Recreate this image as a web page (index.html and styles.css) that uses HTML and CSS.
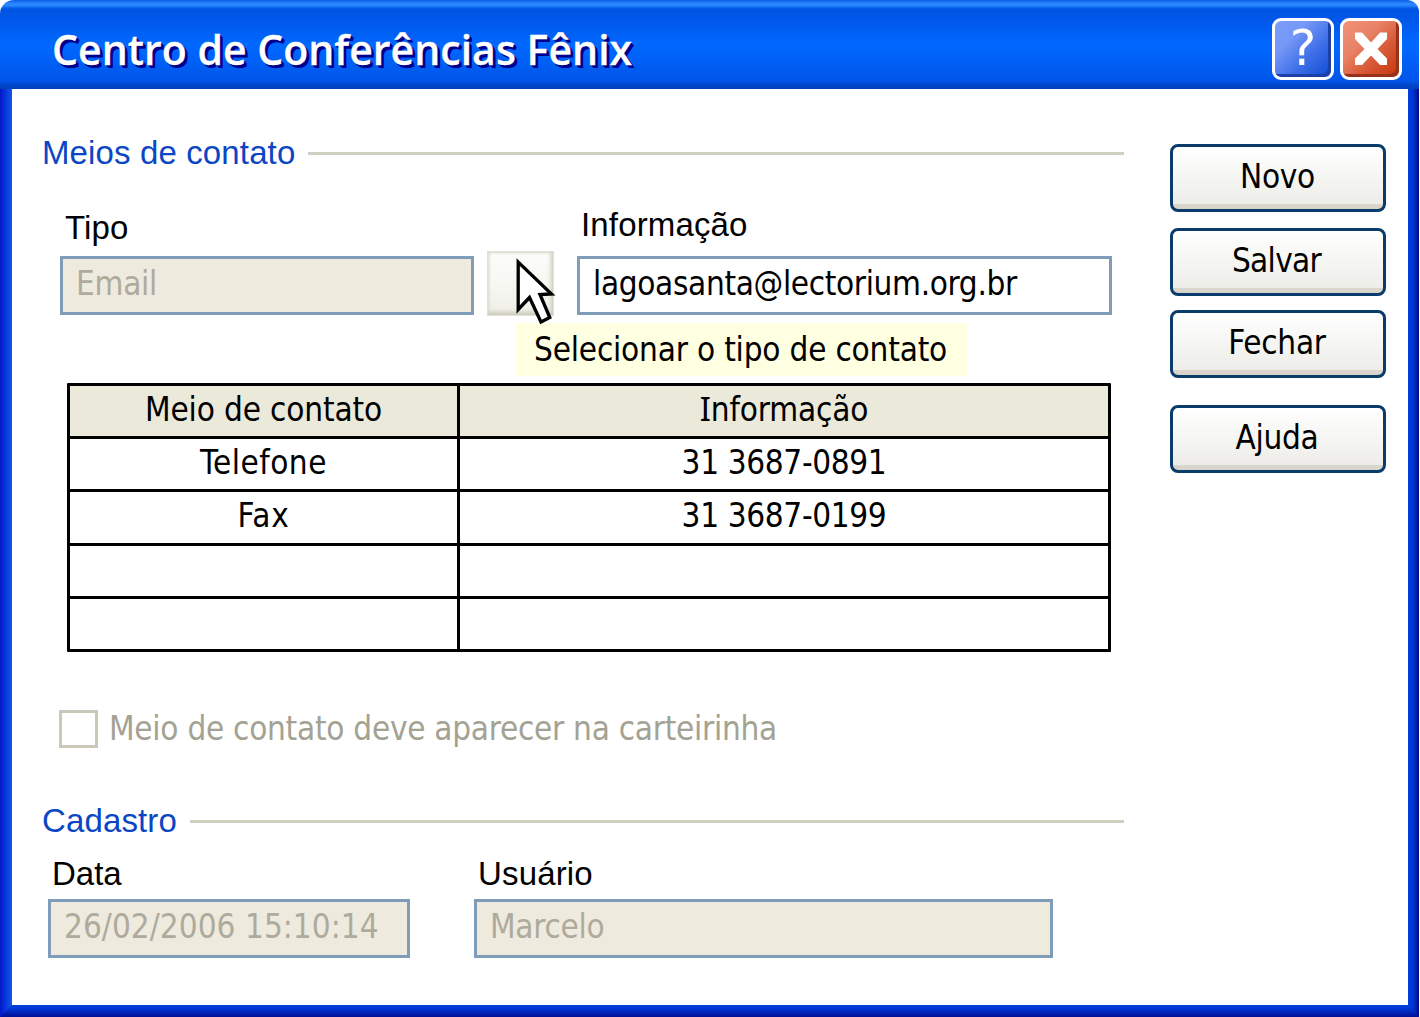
FILE: index.html
```
<!DOCTYPE html>
<html lang="pt-BR">
<head>
<meta charset="utf-8">
<title>Centro de Conferências Fênix</title>
<link rel="stylesheet" href="styles.css">
</head>
<body>
<div class="window">
  <header class="titlebar">
    <h1 class="title">Centro de Conferências Fênix</h1>
    <button class="tool tool-help" type="button" aria-label="Ajuda"><span class="mark">?</span></button>
    <button class="tool tool-close" type="button" aria-label="Fechar">
      <svg class="cross" viewBox="0 0 34 34"><path d="M1 0.500H8L17 10.500L26 0.500H33V7L23.500 17L33 26.500V33H26L17 23.500L8 33H1V26.500L10.500 17L1 7Z"/></svg>
    </button>
  </header>
  <div class="edge edge-left"></div>
  <div class="edge edge-right"></div>
  <div class="edge edge-bottom"></div>
  <div class="client">
    <main class="main">
      <div class="section section-contact"><h2>Meios de contato</h2><span class="rule"></span></div>
      <div class="fields contact-fields">
        <div class="field tipo"><span class="label">Tipo</span><div class="input disabled">Email</div></div>
        <button class="picker" type="button" aria-label="Selecionar">
          <svg class="cursor" viewBox="0 0 44 68"><path d="M4.200 5V52.500L15.500 40.500L27 65L35.800 60.500L26 37.500L37.500 37Z"/></svg>
        </button>
        <div class="field info"><span class="label">Informação</span><div class="input email">lagoasanta@lectorium.org.br</div></div>
        <div class="tooltip">Selecionar o tipo de contato</div>
      </div>
      <div class="grid">
        <div class="cell head">Meio de contato</div><div class="cell head"><span class="cap">I</span>nformação</div>
        <div class="cell tel">Telefone</div><div class="cell number">31 3687-0891</div>
        <div class="cell fax">Fax</div><div class="cell number">31 3687-0199</div>
        <div class="cell"></div><div class="cell"></div>
        <div class="cell"></div><div class="cell"></div>
      </div>
      <div class="check"><span class="box"></span><span class="check-text">Meio de contato deve aparecer na carteirinha</span></div>
      <div class="section section-record"><h2>Cadastro</h2><span class="rule"></span></div>
      <div class="fields record-fields">
        <div class="field data"><span class="label">Data</span><div class="input disabled date">26/02/2006 15:10:14</div></div>
        <div class="field user"><span class="label">Usuário</span><div class="input disabled">Marcelo</div></div>
      </div>
    </main>
    <aside class="actions">
      <button class="action" type="button">Novo</button>
      <button class="action salvar" type="button">Salvar</button>
      <button class="action fechar" type="button">Fechar</button>
      <button class="action ajuda" type="button">Ajuda</button>
    </aside>
  </div>
</div>
</body>
</html>
```
FILE: styles.css
```
* { box-sizing: border-box; }
body {
  margin: 0;
  background: #fff;
  color: #000;
  font: 33px "DejaVu Sans Condensed", "DejaVu Sans", sans-serif;
  letter-spacing: -0.27px;
  overflow: hidden;
}
button { padding: 0; margin: 0; color: inherit; font: inherit; letter-spacing: inherit; }
.window {
  display: grid;
  width: 1419px;
  height: 1017px;
  grid-template: 89px 916px 12px / 12px 1396px 11px;
}

/* Title bar */
.titlebar {
  grid-area: 1 / 1 / 2 / 4;
  display: flex;
  align-items: flex-start;
  gap: 6px;
  padding: 0 17px 0 52px;
  border-radius: 14px 12px 0 0;
  background: linear-gradient(#0a5fea 0, #1a72f2 2px, #2f8cff 4px, #2280fa 6px, #0860ea 8px, #0054e2 9px, #0056e8 18px, #0068ff 45px, #0056ea 80px, #0052e0 82px, #0048d2 84px, #003fb8 89px);
}
.title {
  flex: 1;
  margin: 0;
  color: #fff;
  font: 600 41px/98px "Open Sans", sans-serif;
  letter-spacing: 0.02px;
  height: 89px;
  text-shadow: 1px 1px 0 #00008c, 2px 2px 0 #00008c, 3px 3px 0 #00008c;
  -webkit-text-stroke: 0.3px #fff;
}
.tool {
  width: 62px;
  height: 62px;
  margin-top: 18px;
  border: 3px solid #fff;
  border-radius: 9px;
  color: #fff;
  display: flex;
  justify-content: center;
}
.tool-help {
  background: linear-gradient(135deg, #7c9df8 0, #7597f6 30%, #3f6fe8 62%, #0d4ad4 100%);
  box-shadow: inset -3px -3px 0 #1c3fa8;
}
.tool-close {
  align-items: center;
  background: linear-gradient(135deg, #f0927a 0, #e98266 35%, #d85a38 62%, #c43408 100%);
  box-shadow: inset -3px -3px 0 #98301a;
}
.mark { font: 50px/54px "DejaVu Sans", sans-serif; letter-spacing: 0; }
.cross { width: 34px; height: 34px; fill: #fff; }

/* Window frame */
.edge-left { grid-area: 2 / 1 / 4 / 2; background: linear-gradient(90deg, #0018c8, #0838dc 50%, #1258ea); }
.edge-right { grid-area: 2 / 3 / 4 / 4; background: linear-gradient(90deg, #0040e0, #0034d0 45%, #001aa8 80%, #000c80); }
.edge-bottom {
  grid-area: 3 / 1 / 4 / 4;
  background: linear-gradient(#0040e0, #0034d0 35%, #001aa8 80%, #001090);
  clip-path: polygon(12px 0, 1408px 0, 100% 100%, 0 100%);
}

.client { grid-area: 2 / 2 / 3 / 3; display: flex; padding: 43px 22px 0 30px; }
.main { width: 1082px; margin-right: 46px; }

/* Section headings */
.section { display: flex; align-items: center; height: 40px; }
.section h2 {
  margin: 0;
  padding-top: 2px;
  color: #0b46c4;
  font: 33px/40px "Liberation Sans", sans-serif;
  letter-spacing: 0.13px;
}
.section-contact h2 { width: 266px; }
.section-record h2 { width: 148px; }
.rule { flex: 1; height: 3px; margin-top: 3px; background: #d0d0c2; }

/* Fields */
.fields { display: flex; align-items: flex-end; }
.contact-fields { position: relative; margin: 33px 0 0 18px; }
.label {
  display: block;
  font: 33px/40px "Liberation Sans", sans-serif;
  letter-spacing: 0.15px;
}
.input {
  height: 59px;
  padding-left: 13px;
  border: 3px solid #7f9db9;
  background: #fff;
  line-height: 49px;
  white-space: nowrap;
}
.disabled { background: #eeeade; color: #aeab9c; }
.email { letter-spacing: -0.34px; }
.date { letter-spacing: 0.04px; }
.tipo { width: 414px; }
.tipo .label { padding-left: 5px; margin-bottom: 8px; }
.info { width: 535px; margin-left: 23px; }
.info .label { padding-left: 4px; margin-bottom: 11px; }
.picker {
  position: relative;
  width: 67px;
  height: 65px;
  margin: 0 0 -1px 13px;
  border: 0;
  border-radius: 1px;
  background: linear-gradient(#fdfdfb, #f6f6f1 60%, #eeeee6);
  box-shadow: inset 0 0 0 1px #e2e2d8, inset -3px -4px 4px #cccabb, inset 2px 2px 3px #d6d5c9;
}
.cursor {
  position: absolute;
  left: 27px;
  top: 6px;
  width: 44px;
  height: 68px;
  fill: #fff;
  stroke: #000;
  stroke-width: 3.3;
  z-index: 2;
}
.tooltip {
  position: absolute;
  left: 456px;
  top: 118px;
  width: 451px;
  height: 53px;
  padding-left: 18px;
  background: #ffffe1;
  line-height: 53px;
  letter-spacing: -0.19px;
  white-space: nowrap;
}

/* Contact list */
.grid {
  display: grid;
  grid-template: repeat(5, 1fr) / 387px 1fr;
  gap: 3px;
  width: 1044px;
  height: 269px;
  margin: 68px 0 0 25px;
  padding: 3px;
  border-radius: 1px;
  background: #000;
}
.cell { background: #fff; text-align: center; line-height: 47px; }
.head { background: #ebe9da; letter-spacing: -0.15px; }
.cap { font-family: "Noto Sans", sans-serif; line-height: 1; }
.tel { letter-spacing: 0.47px; }
.fax { letter-spacing: 0.8px; }
.number { letter-spacing: -0.35px; }

/* Checkbox */
.check { display: flex; gap: 11px; height: 38px; margin: 58px 0 0 17px; color: #a3a293; line-height: 37px; }
.box { width: 39px; height: 38px; border: 3px solid #cac8bb; }
.section-record { margin-top: 52px; }

.record-fields { gap: 64px; margin: 14px 0 0 6px; }
.record-fields .label { margin-bottom: 5px; padding-left: 4px; }
.record-fields .data .label { letter-spacing: 0; }
.data { width: 362px; }
.user { width: 579px; }

/* Action buttons */
.actions { width: 216px; padding-top: 12px; }
.action {
  display: flex;
  justify-content: center;
  align-items: flex-start;
  width: 216px;
  height: 68px;
  padding-right: 1px;
  border: 3px solid #0a3c6b;
  border-radius: 8px;
  background: linear-gradient(#dcd7cc, #d8d3c8) bottom / 100% 5px no-repeat, linear-gradient(#fff, #f6f6f4 45%, #ecebe6);
  background-origin: padding-box;
  background-clip: padding-box, border-box;
  line-height: 59px;
}
.salvar { margin-top: 16px; padding-right: 3px; letter-spacing: -0.7px; }
.fechar { margin-top: 14px; padding-right: 2px; }
.ajuda { margin-top: 27px; padding-right: 2px; }
```
